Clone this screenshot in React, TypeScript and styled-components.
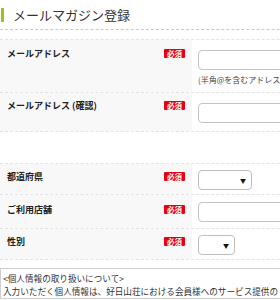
import styled, { createGlobalStyle } from "styled-components";

const GlobalStyle = createGlobalStyle`
  html, body {
    margin: 0;
    padding: 0;
    background: #fff;
  }
  body {
    font-family: "Noto Sans CJK JP", "Noto Sans", sans-serif;
    color: #333;
  }
`;

const Page = styled.div`
  width: 280px;
  height: 300px;
  overflow: hidden;
`;

const Inner = styled.div`
  width: 340px;
`;

const TitleBar = styled.h2`
  margin: 0;
  height: 29px;
  display: flex;
  align-items: center;
  gap: 9px;
  padding: 0 0 0 1px;
  border-bottom: 1px dashed #c8c8c8;
  font-size: 13px;
  font-weight: normal;
  line-height: 1;
  color: #333;
  &::before {
    content: "";
    width: 3px;
    height: 14px;
    background: #9fc31a;
  }
`;

const FormTable = styled.div<{ $top: number }>`
  margin-top: ${p => p.$top}px;
  border-top: 1px dashed #e2e2e2;
`;

const Row = styled.div<{ $h: number }>`
  display: grid;
  grid-template-columns: 192px 1fr;
  height: ${p => p.$h}px;
  border-bottom: 1px dashed #e2e2e2;
  box-sizing: border-box;
`;

const LabelCell = styled.div<{ $pt: number }>`
  background: #f8f8f8;
  display: flex;
  justify-content: space-between;
  align-items: flex-start;
  padding: ${p => p.$pt}px 7px 0 7px;
`;

const Label = styled.span`
  font-size: 9px;
  font-weight: bold;
  line-height: 12px;
  color: #222;
`;

const Badge = styled.span`
  width: 21px;
  height: 9px;
  margin-top: 1px;
  background: #e50012;
  color: #fff;
  font-size: 7.5px;
  font-weight: bold;
  line-height: 9px;
  text-align: center;
  border-radius: 1px;
`;

const ValueCell = styled.div<{ $pt: number }>`
  padding: ${p => p.$pt}px 0 0 6px;
`;

const TextBox = styled.div`
  width: 150px;
  height: 20px;
  box-sizing: border-box;
  border: 1px solid #c4c4c4;
  border-radius: 4px;
  background: #fff;
`;

const SelectBox = styled.div<{ $w: number }>`
  width: ${p => p.$w}px;
  height: 20px;
  box-sizing: border-box;
  border: 1px solid #bdbdbd;
  border-radius: 4px;
  background: #fff;
  display: flex;
  align-items: center;
  justify-content: flex-end;
  padding-right: 5px;
  font-size: 6px;
  color: #111;
`;

const Note = styled.div`
  margin-top: 4px;
  font-size: 8px;
  line-height: 12px;
  color: #444;
  white-space: nowrap;
`;

const PolicyBox = styled.div`
  margin-top: 8px;
  border: 1px solid #cfcfcf;
  border-right: none;
  padding: 3px 0 0 2px;
  font-size: 8.6px;
  line-height: 13px;
  color: #333;
  white-space: nowrap;
`;

function App() {
  return (
    <Page>
      <GlobalStyle />
      <Inner>
        <TitleBar>メールマガジン登録</TitleBar>

        <FormTable $top={9}>
          <Row $h={53}>
            <LabelCell $pt={8}>
              <Label>メールアドレス</Label>
              <Badge>必須</Badge>
            </LabelCell>
            <ValueCell $pt={10}>
              <TextBox />
              <Note>(半角@を含むアドレスを入力)</Note>
            </ValueCell>
          </Row>
          <Row $h={39}>
            <LabelCell $pt={7}>
              <Label>メールアドレス (確認)</Label>
              <Badge>必須</Badge>
            </LabelCell>
            <ValueCell $pt={10}>
              <TextBox />
            </ValueCell>
          </Row>
        </FormTable>

        <FormTable $top={31}>
          <Row $h={31}>
            <LabelCell $pt={7}>
              <Label>都道府県</Label>
              <Badge>必須</Badge>
            </LabelCell>
            <ValueCell $pt={6}>
              <SelectBox $w={54}>▼</SelectBox>
            </ValueCell>
          </Row>
          <Row $h={34}>
            <LabelCell $pt={9}>
              <Label>ご利用店舗</Label>
              <Badge>必須</Badge>
            </LabelCell>
            <ValueCell $pt={7}>
              <TextBox />
            </ValueCell>
          </Row>
          <Row $h={31}>
            <LabelCell $pt={7}>
              <Label>性別</Label>
              <Badge>必須</Badge>
            </LabelCell>
            <ValueCell $pt={6}>
              <SelectBox $w={37}>▼</SelectBox>
            </ValueCell>
          </Row>
        </FormTable>

        <PolicyBox>
          &lt;個人情報の取り扱いについて&gt;
          <br />
          入力いただく個人情報は、好日山荘における会員様へのサービス提供の
        </PolicyBox>
      </Inner>
    </Page>
  );
}

export default App;
